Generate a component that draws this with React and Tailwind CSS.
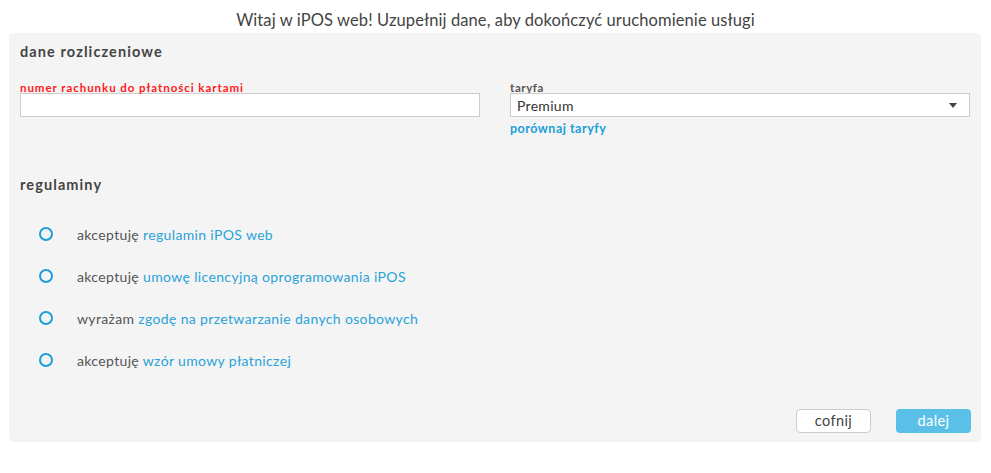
import { useState } from 'react';

const terms = [
  { lead: 'akceptuję', link: 'regulamin iPOS web' },
  { lead: 'akceptuję', link: 'umowę licencyjną oprogramowania iPOS' },
  { lead: 'wyrażam', link: 'zgodę na przetwarzanie danych osobowych' },
  { lead: 'akceptuję', link: 'wzór umowy płatniczej' },
];

export default function App() {
  const [checked, setChecked] = useState({});

  return (
    <div className="w-[991px] h-[473px] bg-white font-['Lato',sans-serif] text-[#444]">
      <h1 className="pt-[10px] h-[33px] text-center text-[16.5px] leading-[20px] tracking-[0.1px] text-[#444]">
        Witaj w iPOS web! Uzupełnij dane, aby dokończyć uruchomienie usługi
      </h1>

      <div className="mx-[9px] w-[972px] h-[409px] rounded-[4px] bg-[#f4f4f4] px-[11px] pt-[11px] flex flex-col">
        {/* dane rozliczeniowe */}
        <h2 className="text-[14.5px] leading-[16px] font-bold tracking-[1.1px] text-[#444]">dane rozliczeniowe</h2>

        <div className="mt-[22px] flex gap-[30px]">
          <div className="w-[460px]">
            <label className="block text-[11.5px] leading-[12px] font-bold tracking-[0.95px] text-[#ff1a1a]">
              numer rachunku do płatności kartami
            </label>
            <input
              type="text"
              className="-mt-[1px] block w-full h-[24px] border border-[#ccc] bg-white outline-none px-2 text-[14px]"
            />
          </div>
          <div className="w-[460px]">
            <label className="block text-[11.5px] leading-[12px] font-bold tracking-[0.6px] text-[#555]">taryfa</label>
            <div className="-mt-[1px] relative h-[24px] border border-[#ccc] bg-white flex items-center pl-[6px]">
              <span className="text-[14px] tracking-[0.3px] text-[#333]">Premium</span>
              <svg className="absolute right-[12px] top-[9px]" width="8" height="5" viewBox="0 0 8 5">
                <path d="M0 0h8L4 5z" fill="#444" />
              </svg>
            </div>
            <a className="mt-[5px] block text-[12.5px] leading-[14px] font-bold tracking-[0.5px] text-[#1a9fd8] cursor-pointer">
              porównaj taryfy
            </a>
          </div>
        </div>

        {/* regulaminy */}
        <h2 className="mt-[41px] text-[14.5px] leading-[16px] font-bold tracking-[1.1px] text-[#444]">regulaminy</h2>

        <div className="mt-[31px] flex flex-col gap-[22px] pl-[19px]">
          {terms.map((t, i) => (
            <label key={i} className="flex items-center h-[20px] cursor-pointer" onClick={() => setChecked({ ...checked, [i]: !checked[i] })}>
              <span className="w-[14px] h-[14px] rounded-full border-2 border-[#1a9fd8] flex items-center justify-center">
                {checked[i] && <span className="w-[6px] h-[6px] rounded-full bg-[#1a9fd8]" />}
              </span>
              <span className="ml-[24px] text-[14px] tracking-[0.35px] text-[#555]">
                {t.lead} <span className="text-[#29a3d8]">{t.link}</span>
              </span>
            </label>
          ))}
        </div>

        <div className="mt-auto mb-[9px] -mr-[1px] flex justify-end gap-[25px]">
          <button className="w-[75px] h-[24px] rounded-[4px] border border-[#ccc] bg-white text-[14.5px] tracking-[0.4px] text-[#444]">cofnij</button>
          <button className="w-[75px] h-[24px] rounded-[4px] bg-[#5bc0e8] text-[14.5px] tracking-[0.4px] text-white">dalej</button>
        </div>
      </div>
    </div>
  );
}
